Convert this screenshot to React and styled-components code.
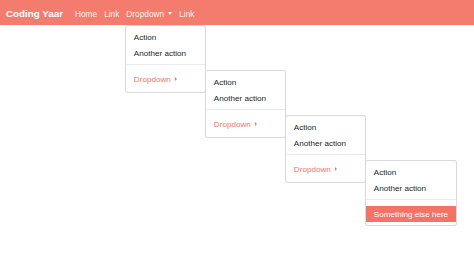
import React from 'react'
import styled, { createGlobalStyle } from 'styled-components'

const GlobalStyle = createGlobalStyle`
  body {
    margin: 0;
    font-family: "Liberation Sans", Arial, sans-serif;
    background: #fff;
  }
`

const Page = styled.div`
  position: relative;
  min-height: 266px;
`

const Navbar = styled.nav`
  display: flex;
  align-items: stretch;
  height: 25px;
  padding: 0 6px;
  background: #f47c6e;
`

const Brand = styled.a`
  display: flex;
  align-items: center;
  padding-top: 2px;
  margin-right: 8.5px;
  color: #fff;
  font-size: 9.8px;
  font-weight: 700;
`

const NavList = styled.ul`
  display: flex;
  margin: 0;
  padding: 0;
  list-style: none;
`

const NavItem = styled.li`
  position: relative;
  display: flex;
`

const NavLink = styled.a`
  display: flex;
  align-items: center;
  padding: 2px 3.5px 0;
  color: rgba(255, 255, 255, 0.92);
  font-size: 8.3px;
`

const CaretDown = styled.span`
  width: 0;
  height: 0;
  margin-left: 4px;
  border-top: 3px solid rgba(255, 255, 255, 0.92);
  border-left: 2.5px solid transparent;
  border-right: 2.5px solid transparent;
`

const Menu = styled.ul`
  position: absolute;
  top: ${p => (p.$root ? '100%' : '-1px')};
  left: ${p => (p.$root ? '2px' : '100%')};
  z-index: 10;
  min-width: 81px;
  width: max-content;
  box-sizing: border-box;
  margin: 0;
  padding: 3px 0;
  list-style: none;
  background: #fff;
  border: 1px solid rgba(0, 0, 0, 0.15);
  border-radius: 3px;
`

const MenuItem = styled.li`
  position: relative;
  display: flex;
  align-items: center;
  height: 16px;
  padding: ${p => (p.$accent ? '0 8px 2px' : '0 8px')};
  font-size: 8.1px;
  color: ${p => (p.$accent ? '#ec7668' : p.$active ? '#fff' : '#212529')};
  background: ${p => (p.$active ? '#f27466' : 'transparent')};
  white-space: nowrap;
`

const Divider = styled.li`
  height: 0;
  margin: 3px 0 6px;
  border-top: 1px solid #e9ecef;
`

const CaretRight = styled.span`
  width: 0;
  height: 0;
  margin-left: 4.5px;
  border-left: 2.5px solid #ec7668;
  border-top: 2.5px solid transparent;
  border-bottom: 2.5px solid transparent;
`

function SubMenu({ depth, root }) {
  return (
    <Menu $root={root}>
      <MenuItem>Action</MenuItem>
      <MenuItem>Another action</MenuItem>
      <Divider />
      {depth > 0 ? (
        <MenuItem $accent>
          Dropdown
          <CaretRight />
          <SubMenu depth={depth - 1} />
        </MenuItem>
      ) : (
        <MenuItem $active>Something else here</MenuItem>
      )}
    </Menu>
  )
}

const App = () => {
  return (
    <Page>
      <GlobalStyle />
      <Navbar>
        <Brand>Coding Yaar</Brand>
        <NavList>
          <NavItem><NavLink>Home</NavLink></NavItem>
          <NavItem><NavLink>Link</NavLink></NavItem>
          <NavItem>
            <NavLink>Dropdown<CaretDown /></NavLink>
            <SubMenu depth={3} root />
          </NavItem>
          <NavItem><NavLink>Link</NavLink></NavItem>
        </NavList>
      </Navbar>
    </Page>
  )
}

export default App
